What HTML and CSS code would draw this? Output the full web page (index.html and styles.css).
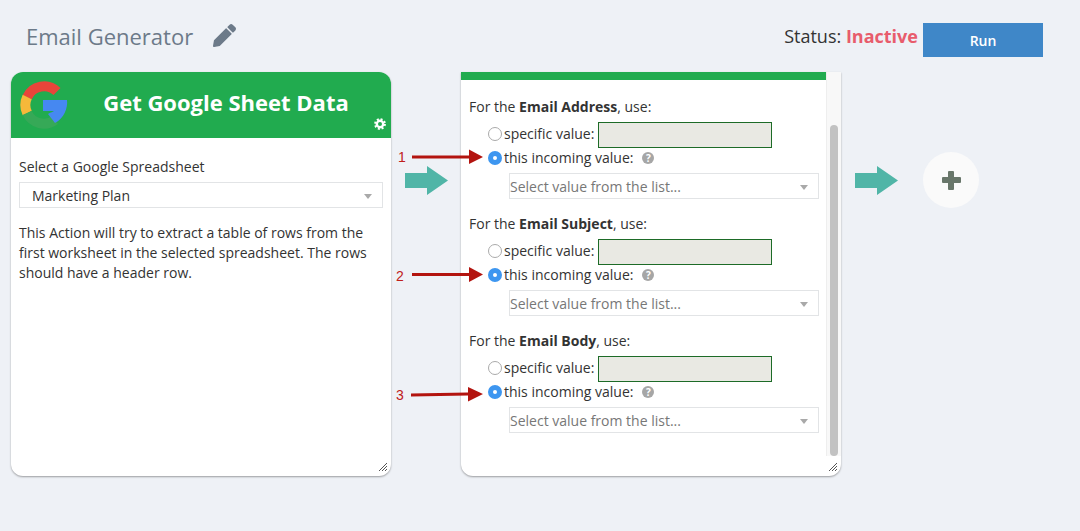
FILE: index.html
```html
<!DOCTYPE html>
<html lang="en">
<head>
  <meta charset="UTF-8">
  <meta name="viewport" content="width=device-width, initial-scale=1">
  <title>Email Generator</title>
  <link rel="stylesheet" href="styles.css">
</head>
<body>
  <header class="topbar">
    <div class="title-group">
      <h1 class="title">Email Generator</h1>
      <svg class="pencil" viewBox="0 0 512 512"><path d="M497.9 142.1l-46.1 46.1c-4.7 4.7-12.3 4.7-17 0l-111-111c-4.7-4.7-4.7-12.3 0-17l46.1-46.1c18.7-18.7 49.1-18.7 67.9 0l60.1 60.1c18.8 18.7 18.8 49.1 0 67.9zM284.2 99.8L21.6 362.4.4 483.9c-2.9 16.4 11.4 30.6 27.8 27.8l121.5-21.3 262.6-262.6c4.7-4.7 4.7-12.3 0-17l-111-111c-4.8-4.7-12.4-4.7-17.1 0z"/></svg>
    </div>
    <div class="status-group">
      <span class="status">Status: <b class="inactive">Inactive</b></span>
      <button class="run-btn">Run</button>
    </div>
  </header>

  <main class="flow">
    <section class="card">
      <div class="card-head">
        <svg class="g-logo" viewBox="0 0 48 48">
          <path d="M7.2 16.2A18.5 18.5 0 0 1 37 10.500" fill="none" stroke="#e8453a" stroke-width="10"/>
          <path d="M7.2 16A18.5 18.5 0 0 0 7.2 32" fill="none" stroke="#f6b83a" stroke-width="10"/>
          <path d="M7.2 32A18.5 18.5 0 0 0 35 39" fill="none" stroke="#36a957" stroke-width="10"/>
          <path d="M23 19H47C48 27 44 37 35 42L28 33C31 31 33 31 34 30H23Z" fill="#4688f1"/>
        </svg>
        <h2 class="card-title">Get Google Sheet Data</h2>
        <svg class="gear" viewBox="0 0 12 12">
          <circle cx="6" cy="6" r="3.2" fill="none" stroke="#fff" stroke-width="2.4"/>
          <circle cx="6" cy="6" r="4.9" fill="none" stroke="#fff" stroke-width="2" stroke-dasharray="2 1.85"/>
        </svg>
      </div>
      <div class="card-body">
        <label class="sheet-label">Select a Google Spreadsheet</label>
        <div class="select sheet-select">Marketing Plan</div>
        <p class="note">This Action will try to extract a table of rows from the first worksheet in the selected spreadsheet. The rows should have a header row.</p>
      </div>
      <svg class="grip" viewBox="0 0 8 8"><path d="M0 8L8 0M3 8L8 3M6 8L8 6" stroke="#555" stroke-width="1"/></svg>
    </section>

    <div class="connector">
      <svg class="flow-arrow" viewBox="0 0 43 29"><path d="M0 7H22V0L43 14.5L22 29V22H0Z"/></svg>
    </div>

    <section class="card card-pane">
      <div class="pane">
        <div class="pane-content">
          <div class="pane-bar"></div>
          <div class="field">
            <p class="field-title">For the <b>Email Address</b>, use:</p>
            <div class="option"><span class="radio"></span>specific value:<span class="value-box"></span></div>
            <div class="option"><span class="radio on"></span>this incoming value:<span class="help">?</span></div>
            <div class="select value-select">Select value from the list...</div>
          </div>
          <div class="field">
            <p class="field-title">For the <b>Email Subject</b>, use:</p>
            <div class="option"><span class="radio"></span>specific value:<span class="value-box"></span></div>
            <div class="option"><span class="radio on"></span>this incoming value:<span class="help">?</span></div>
            <div class="select value-select">Select value from the list...</div>
          </div>
          <div class="field">
            <p class="field-title">For the <b>Email Body</b>, use:</p>
            <div class="option"><span class="radio"></span>specific value:<span class="value-box"></span></div>
            <div class="option"><span class="radio on"></span>this incoming value:<span class="help">?</span></div>
            <div class="select value-select">Select value from the list...</div>
          </div>
        </div>
        <div class="scrollbar"><div class="thumb"></div></div>
      </div>
      <svg class="grip" viewBox="0 0 8 8"><path d="M0 8L8 0M3 8L8 3M6 8L8 6" stroke="#555" stroke-width="1"/></svg>
    </section>

    <div class="connector">
      <svg class="flow-arrow" viewBox="0 0 43 29"><path d="M0 7H22V0L43 14.5L22 29V22H0Z"/></svg>
    </div>

    <button class="add-btn" aria-label="Add action"></button>
  </main>

  <!-- red callouts drawn over the screenshot -->
  <span class="callout-num num-1">1</span>
  <span class="callout-num num-2">2</span>
  <span class="callout-num num-3">3</span>
  <svg class="callouts" viewBox="0 0 1080 531">
    <g fill="#b3140f" stroke="none">
      <path d="M412 155.5H469V149.500L483 157L469 164V158.500H412Z"/>
      <path d="M412 273H469V267L483 274.500L469 282V276H412Z"/>
      <path d="M411 393.500L468 392.500V387L483 394L468 401.500V395.500L411 396.500Z"/>
    </g>
  </svg>
</body>
</html>
```

FILE: styles.css
```css
* { box-sizing: border-box; }
html, body { height: 100%; }
body { margin: 0; background-color: #eef1f6; color: #333; font-family: "Open Sans", Arial, sans-serif; font-size: 14px; overflow: hidden; }

.topbar { display: flex; justify-content: space-between; height: 72px; padding: 23px 37px 0 26px; }
.title-group { display: flex; align-items: flex-start; gap: 20px; }
.title { margin: 0; font-size: 22px; font-weight: 400; line-height: 26px; color: #6c7a89; }
.pencil { width: 23px; height: 23px; margin-top: 1px; fill: #6c7a89; }
.status-group { display: flex; align-items: flex-start; gap: 5px; }
.status { font-size: 18px; line-height: 26px; color: #333; }
.inactive { color: #e85c6c; font-weight: 700; }
.run-btn { width: 120px; height: 34px; border: none; background-color: #3f87c8; color: #fff; font-family: inherit; font-size: 14px; font-weight: 600; }

.flow { display: flex; align-items: flex-start; padding-left: 11px; }
.card { position: relative; width: 380px; height: 404px; background-color: #fff; border-radius: 12px; box-shadow: 0 1px 2px rgba(0,0,0,0.35); overflow: hidden; }
.card-pane { border-radius: 0 0 12px 12px; }
.card-head { position: relative; display: flex; align-items: center; justify-content: center; height: 66px; background-color: #21ab4f; padding: 0 10px 6px 60px; }
.card-title { margin: 0; color: #fff; font-size: 22px; font-weight: 700; }
.g-logo { position: absolute; left: 9px; top: 9px; width: 48px; height: 48px; }
.gear { position: absolute; right: 5px; bottom: 8px; width: 12px; height: 12px; }
.card-body { padding: 19px 8px 0; }
.sheet-label { display: block; line-height: 20px; }
.select { position: relative; height: 26px; border: 1px solid #e2e4e6; background-color: #fff; line-height: 25px; }
.select::after { content: ""; position: absolute; right: 10px; top: 11px; border: 4.5px solid transparent; border-top: 5px solid #a9a9a9; border-bottom: none; }
.sheet-select { margin-top: 5px; padding-left: 12px; }
.note { margin: 15px 0 0; line-height: 20px; }
.grip { position: absolute; right: 4px; bottom: 5px; width: 8px; height: 8px; }

.connector { display: flex; justify-content: center; width: 70px; padding-top: 94px; }
.flow-arrow { width: 43px; height: 29px; fill: #50b5a7; }

.pane { display: flex; height: 100%; }
.pane-content { width: 365px; }
.pane-bar { height: 8px; background-color: #21ab4f; }
.scrollbar { width: 15px; height: 384px; background-color: #f8f8f8; border-left: 1px solid #eee; padding: 53px 3px 0; }
.thumb { width: 8px; height: 331px; background-color: #c2c2c2; border-radius: 4px; }
.field { padding: 17px 8px 0; height: 117px; }
.field-title { margin: 0 0 4px; line-height: 20px; }
.option { display: flex; align-items: center; height: 24px; padding-left: 19px; white-space: nowrap; }
.radio { width: 14px; height: 14px; margin: 2px 2px 0 0; border: 1px solid #aaa; border-radius: 50%; background-color: #fff; }
.radio.on { border: 5px solid #3d96f0; }
.value-box { width: 174px; height: 26px; margin: 4px 0 0 4px; border: 1px solid #1d6b27; background-color: #e9e9e3; }
.help { width: 12px; height: 12px; margin: 2px 0 0 9px; border-radius: 50%; background-color: #a6a6a6; color: #fff; font-size: 10px; font-weight: 700; line-height: 12px; text-align: center; }
.value-select { margin: 4px 0 0 40px; width: 310px; color: #777; }

.add-btn { width: 56px; height: 56px; margin: 80px 0 0 12px; position: relative; border: none; border-radius: 50%; background-color: #fafafa; }
.add-btn::before, .add-btn::after { content: ""; position: absolute; background-color: #68766a; border-radius: 1px; }
.add-btn::before { left: 19px; top: 25px; width: 19px; height: 6px; }
.add-btn::after { left: 25px; top: 19px; width: 6px; height: 19px; }

.callouts { position: absolute; left: 0; top: 0; width: 1080px; height: 531px; pointer-events: none; }
.callout-num { position: absolute; left: 396px; color: #c0201a; font-family: "Liberation Sans", Arial, sans-serif; font-size: 14px; line-height: 16px; }
.num-1 { top: 149px; left: 398px; }
.num-2 { top: 268px; }
.num-3 { top: 387px; }
```
